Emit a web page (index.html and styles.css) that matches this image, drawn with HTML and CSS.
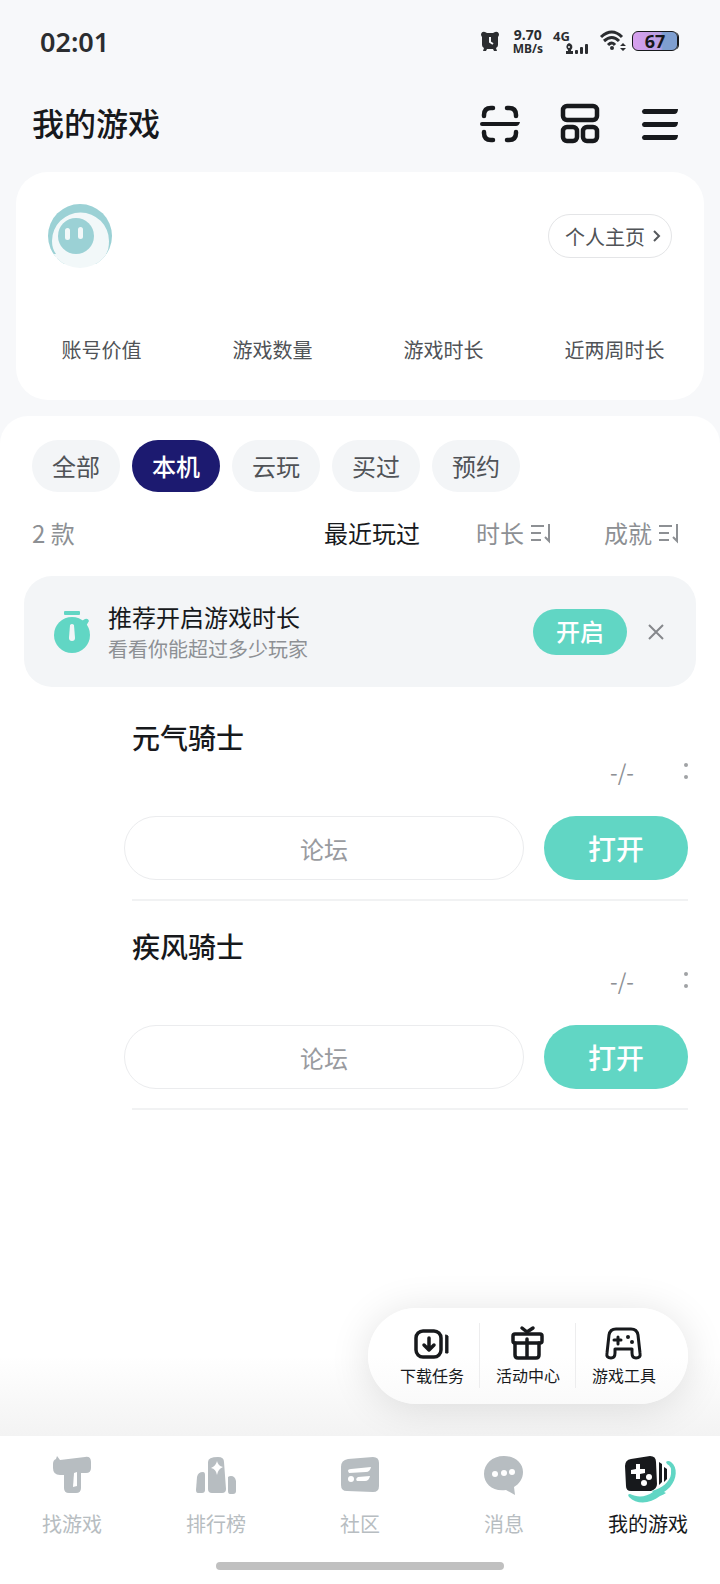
FILE: index.html
```html
<!DOCTYPE html>
<html lang="zh-CN">
<head>
    <meta charset="UTF-8">
    <meta name="viewport" content="width=device-width, initial-scale=1.0">
    <title>我的游戏</title>
    <link rel="stylesheet" href="styles.css">
</head>
<body>

<!-- Status Bar -->
<div class="status-bar">
    <span class="time">02:01</span>
    <div class="status-icons">
        <svg class="alarm" width="18" height="20" viewBox="0 0 18 20">
            <path d="M4 1Q1 0 0 3Q0 5 1 6V14Q1 16 3 17L2 20H5L6 18H12L13 20H16L15 17Q17 16 17 14V6Q18 5 18 3Q17 0 14 1L12 2H6Z" fill="#2b2d30"/>
            <path d="M9 6V11L12 13" fill="none" stroke="#f7f8fa" stroke-width="2"/>
        </svg>
        <div class="speed">
            <span class="speed-value">9.70</span>
            <span class="speed-unit">MB/s</span>
        </div>
        <div class="signal">
            <span>4G</span>
            <svg width="24" height="11" viewBox="0 0 24 11" fill="#2b2d30">
                <path d="M4 0A4 4 0 0 1 6 7V8H8V11H1V8H3V7A4 4 0 0 1 4 0Z"/>
                <circle cx="4" cy="4" r="1" fill="#f7f8fa"/>
                <rect x="10" y="7" width="3" height="4" rx="1"/>
                <rect x="15" y="4" width="3" height="7" rx="1"/>
                <rect x="20" y="1" width="3" height="10" rx="1"/>
            </svg>
        </div>
        <svg class="wifi" width="26" height="22" viewBox="0 0 26 22" fill="none" stroke="#2b2d30" stroke-width="3">
            <path d="M1 7Q12 -3 22 7"/>
            <path d="M4 11Q12 4 19 11"/>
            <path d="M8 15Q12 11 15 15"/>
            <circle cx="12" cy="18" r="2" fill="#2b2d30" stroke="none"/>
            <path d="M20 16L23 13L26 16ZM20 18L23 21L26 18Z" fill="#2b2d30" stroke="none"/>
        </svg>
        <div class="battery">67</div>
    </div>
</div>

<!-- Header -->
<header>
    <h1>我的游戏</h1>
    <div class="header-actions">
        <button type="button" aria-label="扫一扫">
            <svg width="40" height="40" viewBox="0 0 40 40" fill="none" stroke="#17191c" stroke-width="4.5" stroke-linecap="round">
                <path d="M4 12V11Q4 4 11 4H13M27 4H29Q36 4 36 11V12M36 28V29Q36 36 29 36H27M13 36H11Q4 36 4 29V28"/>
                <path d="M2 18H40Q39 22 36 22H2Q0 22 0 20T2 18Z" fill="#17191c" stroke="none"/>
            </svg>
        </button>
        <button type="button" aria-label="布局">
            <svg width="40" height="40" viewBox="0 0 40 40" fill="none" stroke="#17191c" stroke-width="4.5">
                <rect x="3" y="2" width="34" height="14" rx="4"/>
                <rect x="3" y="23" width="14" height="14" rx="4"/>
                <rect x="23" y="23" width="14" height="14" rx="4"/>
            </svg>
        </button>
        <button type="button" aria-label="菜单">
            <svg width="40" height="40" viewBox="0 0 40 40" fill="#17191c">
                <path d="M4 5H38Q38 10 34 10H4Q2 9.500 2 7.500T4 5Z"/>
                <path d="M4 18H38Q38 23 34 23H4Q2 22.500 2 20.500T4 18Z"/>
                <path d="M4 31H38Q38 36 34 36H4Q2 35.500 2 33.500T4 31Z"/>
            </svg>
        </button>
    </div>
</header>

<!-- Profile Card -->
<section class="profile-card">
    <div class="profile-top">
        <svg class="avatar" width="64" height="64" viewBox="0 0 64 64">
            <clipPath id="avatar-clip"><circle cx="32" cy="32" r="32"/></clipPath>
            <g clip-path="url(#avatar-clip)">
                <path d="M0 0H64V50H59L55 60H9V53L0 50Z" fill="#9bd1d5"/>
                <path d="M4 37A28 28 0 0 1 61 37Q61 46 58 50L64 52V64H0V50H8Q4 45 4 37Z" fill="#f2f8f9"/>
                <circle cx="28" cy="32" r="18" fill="#9bd1d5"/>
                <rect x="17" y="24" width="5" height="12" rx="2.5" fill="#f2f8f9"/>
                <rect x="30" y="23" width="5" height="12" rx="2.5" fill="#f2f8f9"/>
            </g>
        </svg>
        <a href="#" class="profile-link">个人主页
            <svg width="8" height="12" viewBox="0 0 8 12" fill="none" stroke="#55585c" stroke-width="2"><path d="M1 1L6 6L1 11"/></svg>
        </a>
    </div>
    <ul class="stats">
        <li>账号价值</li>
        <li>游戏数量</li>
        <li>游戏时长</li>
        <li>近两周时长</li>
    </ul>
</section>

<main>
    <!-- Filter Chips -->
    <div class="chips">
        <button type="button">全部</button>
        <button type="button" class="active">本机</button>
        <button type="button">云玩</button>
        <button type="button">买过</button>
        <button type="button">预约</button>
    </div>

    <!-- Sort Row -->
    <div class="sort-row">
        <span class="count">2 款</span>
        <button type="button" class="active">最近玩过</button>
        <button type="button">时长
            <svg width="20" height="20" viewBox="0 0 20 20" fill="none" stroke="#8d9094" stroke-width="2"><path d="M-1 3H12M-1 10H9M-1 17H9M17 1V18L13 14"/></svg>
        </button>
        <button type="button">成就
            <svg width="20" height="20" viewBox="0 0 20 20" fill="none" stroke="#8d9094" stroke-width="2"><path d="M-1 3H12M-1 10H9M-1 17H9M17 1V18L13 14"/></svg>
        </button>
    </div>

    <!-- Play Time Banner -->
    <div class="banner">
        <svg width="38" height="44" viewBox="0 0 38 44" fill="#61d6c4">
            <rect x="10" y="1" width="16" height="4" rx="1"/>
            <circle cx="18" cy="25" r="18"/>
            <path d="M26 12L31 9Q34 8 35 11L32 16Z"/>
            <path d="M16 15Q18 13 20 15L21 28Q21 31 18 31T15 28Z" fill="#f3f5f7"/>
        </svg>
        <div class="banner-text">
            <h2>推荐开启游戏时长</h2>
            <p>看看你能超过多少玩家</p>
        </div>
        <button type="button" class="banner-open">开启</button>
        <button type="button" class="banner-close" aria-label="关闭">
            <svg width="16" height="16" viewBox="0 0 16 16" stroke="#85888c" stroke-width="2"><path d="M1 1L15 15M15 1L1 15"/></svg>
        </button>
    </div>

    <!-- Game List -->
    <ul class="games">
        <li class="game">
            <h3>元气骑士</h3>
            <div class="game-meta">
                <span>-/-</span>
                <button type="button" aria-label="更多"><svg width="4" height="16" viewBox="0 0 4 16" fill="#a0a2a5"><circle cx="2" cy="2" r="2"/><circle cx="2" cy="14" r="2"/></svg></button>
            </div>
            <div class="game-actions">
                <button type="button" class="forum">论坛</button>
                <button type="button" class="open">打开</button>
            </div>
        </li>
        <li class="game">
            <h3>疾风骑士</h3>
            <div class="game-meta">
                <span>-/-</span>
                <button type="button" aria-label="更多"><svg width="4" height="16" viewBox="0 0 4 16" fill="#a0a2a5"><circle cx="2" cy="2" r="2"/><circle cx="2" cy="14" r="2"/></svg></button>
            </div>
            <div class="game-actions">
                <button type="button" class="forum">论坛</button>
                <button type="button" class="open">打开</button>
            </div>
        </li>
    </ul>

    <!-- Quick Tools -->
    <div class="tools">
        <a href="#">
            <svg width="40" height="40" viewBox="0 0 40 40" fill="none" stroke="#17191c" stroke-width="3.5" stroke-linecap="round" stroke-linejoin="round">
                <rect x="4" y="8" width="25" height="26" rx="7"/>
                <path d="M17 15V27M12 22L17 27L22 22"/>
                <path d="M34 12L36 13V30H34Z" fill="#17191c" stroke-width="1"/>
            </svg>
            下载任务
        </a>
        <a href="#">
            <svg width="40" height="40" viewBox="0 0 40 40" fill="none" stroke="#17191c" stroke-width="3.5" stroke-linecap="round" stroke-linejoin="round">
                <rect x="5" y="11" width="29" height="9" rx="2"/>
                <path d="M7 20V32Q7 35 10 35H28Q31 35 31 32V20M19 16V35M14 5L19 9L25 5"/>
            </svg>
            活动中心
        </a>
        <a href="#">
            <svg width="40" height="40" viewBox="0 0 40 40" fill="none" stroke="#17191c" stroke-width="3" stroke-linecap="round" stroke-linejoin="round">
                <path d="M11 26H28V30Q28 35 32 35Q37 35 36 30L34 12Q33 6 27 6H12Q6 6 5 12L3 30Q2 35 7 35Q11 35 11 30Z"/>
                <path d="M10 17H17M14 14V21"/>
                <circle cx="24" cy="14" r="2" fill="#17191c" stroke="none"/>
                <circle cx="28" cy="19" r="2" fill="#17191c" stroke="none"/>
            </svg>
            游戏工具
        </a>
    </div>
</main>

<!-- Bottom Navigation -->
<footer>
    <nav>
        <a href="#">
            <svg width="40" height="40" viewBox="0 0 40 40" fill="#b7bdc1">
                <path d="M5 1L8 5L33 2Q39 1 39 7V13Q39 18 34 18H29V33Q29 38 24 38H17Q12 38 12 33V20H8Q1 20 1 13V9Q1 5 4 4Z"/>
                <path d="M22 18L25 17V31L21 32Z" fill="#fff"/>
            </svg>
            找游戏
        </a>
        <a href="#">
            <svg width="40" height="40" viewBox="0 0 40 40" fill="#b7bdc1">
                <path d="M0 35L1 22Q2 17 7 17Q9 17 9 20V35Q9 38 6 38H2Q0 38 0 35Z"/>
                <path d="M12 34V7Q12 2 22 2Q28 2 28 7L30 34Q30 38 26 38H16Q12 38 12 34Z"/>
                <path d="M32 36V22Q33 21 35 21Q39 21 40 26V36Q40 39 37 39H34Q32 39 32 36Z"/>
                <path d="M21 6Q22 11 27 12Q22 14 21 20Q20 14 15 13Q20 11 21 6Z" fill="#fff"/>
            </svg>
            排行榜
        </a>
        <a href="#">
            <svg width="40" height="40" viewBox="0 0 40 40" fill="#b7bdc1">
                <path d="M1 12Q1 5 8 4L33 2Q39 2 39 8V31Q39 37 33 37L7 36Q1 36 1 30Z"/>
                <path d="M8 16Q8 14 11 14L31 12Q30 17 26 17L9 18Z" fill="#fff"/>
                <circle cx="11" cy="24" r="3" fill="#fff"/>
                <path d="M18 22L30 21Q29 26 25 26H17Q15 24 18 22Z" fill="#fff"/>
            </svg>
            社区
        </a>
        <a href="#">
            <svg width="40" height="40" viewBox="0 0 40 40" fill="#b7bdc1">
                <path d="M20 1C31 1 39 8 39 17C39 24 35 29 30 32L31 40L22 35C9 37 0 29 0 19C0 9 8 1 20 1Z"/>
                <circle cx="11" cy="19" r="3" fill="#fff"/>
                <circle cx="20" cy="18" r="3" fill="#fff"/>
                <circle cx="28" cy="17" r="3" fill="#fff"/>
            </svg>
            消息
        </a>
        <a href="#" class="active">
            <svg width="40" height="40" viewBox="0 0 40 40" fill="#17191c">
                <path d="M-3 11Q-3 5 3 4L22 1Q28 1 28 7L29 29Q29 34 23 36H3Q-2 36 -2 31Z"/>
                <path d="M31 7L34 9V27L31 30ZM36 12L39 14V24L36 27Z"/>
                <path d="M8 9H12V14H17V18L12 19V24H8V19H3V15L8 14Z" fill="#fff"/>
                <circle cx="21" cy="22" r="3" fill="#fff"/>
                <circle cx="16" cy="28" r="3" fill="#fff"/>
                <path d="M38 7Q40 5 43 7C50 12 49 24 42 32Q39 35 36 37L38 38Q35 40 32 41C22 49 9 50 1 42Q-1 39 2 39C10 43 18 42 25 37L24 36C34 33 42 27 43 19Q44 11 39 9Z" fill="#61d6c4"/>
            </svg>
            我的游戏
        </a>
    </nav>
    <div class="home-indicator"></div>
</footer>

</body>
</html>
```
FILE: styles.css
```css
/* Basic Reset */
* {
    margin: 0;
    padding: 0;
    box-sizing: border-box;
}

body {
    font-family: "Noto Sans CJK SC", "Noto Sans", sans-serif;
    background-color: #f7f8fa;
    color: #17191c;
    display: flex;
    flex-direction: column;
    min-height: 100vh;
}

button {
    font-family: inherit;
    color: inherit;
    background: none;
    border: none;
    cursor: pointer;
}

a {
    color: inherit;
    text-decoration: none;
}

ul {
    list-style: none;
}

svg {
    display: block;
    flex: none;
    overflow: visible;
}

/* Status Bar */
.status-bar {
    display: flex;
    justify-content: space-between;
    align-items: center;
    height: 82px;
    padding: 0 40px;
    color: #2b2d30;
}

.time {
    font-family: "Noto Sans", sans-serif;
    font-size: 27px;
    font-weight: 600;
}

.status-icons {
    display: flex;
    align-items: center;
    font-family: "Noto Sans", sans-serif;
    font-weight: 700;
}

.speed {
    display: flex;
    flex-direction: column;
    align-items: center;
    margin-left: 14px;
}

.speed-value {
    font-size: 14px;
    line-height: 15px;
}

.speed-unit {
    font-size: 12px;
    line-height: 13px;
}

.signal {
    display: flex;
    flex-direction: column;
    width: 36px;
    margin-left: 10px;
    font-size: 13px;
    line-height: 14px;
}

.signal svg {
    align-self: flex-end;
}

.wifi {
    margin-left: 11px;
}

.battery {
    display: flex;
    align-items: center;
    justify-content: center;
    width: 46px;
    height: 20px;
    margin: 0 2px 0 6px;
    border: 1px solid #17191c;
    border-radius: 6px;
    box-shadow: 2px 0 0 -1px #17191c;
    background: linear-gradient(90deg, #d8a0ee 0%, #b9a0e4 62%, #7f9fd0 68%);
    color: #17191c;
    font-size: 18px;
}

/* Header */
header {
    display: flex;
    justify-content: space-between;
    align-items: center;
    height: 84px;
    padding: 0 40px 0 32px;
}

header h1 {
    padding-bottom: 4px;
    font-size: 32px;
    font-weight: 500;
}

.header-actions {
    display: flex;
    gap: 40px;
}

/* Profile Card */
.profile-card {
    margin: 6px 16px 16px;
    padding: 32px 0 36px;
    background-color: white;
    border-radius: 32px;
}

.profile-top {
    display: flex;
    justify-content: space-between;
    align-items: center;
    padding: 0 32px;
}

.profile-link {
    display: flex;
    align-items: center;
    gap: 8px;
    height: 44px;
    padding: 0 10px 0 16px;
    border: 1px solid #e4e5e7;
    border-radius: 22px;
    color: #505357;
    font-size: 20px;
}

.stats {
    display: grid;
    grid-template-columns: repeat(4, 1fr);
    margin-top: 68px;
    padding-right: 4px;
    color: #505357;
    font-size: 20px;
    line-height: 28px;
    text-align: center;
}

/* Main Panel */
main {
    flex: 1;
    display: flex;
    flex-direction: column;
    padding: 24px 0 32px;
    border-radius: 28px 28px 0 0;
    background: linear-gradient(to top, #f3f3f3, white 80px);
}

.chips {
    display: flex;
    gap: 12px;
    padding: 0 32px;
}

.chips button {
    height: 52px;
    padding: 0 20px 2px;
    border-radius: 26px;
    background-color: #f3f5f7;
    color: #505357;
    font-size: 24px;
}

.chips .active {
    background-color: #1c1a70;
    color: white;
    font-weight: 500;
}

.sort-row {
    display: flex;
    gap: 52px;
    margin: 23px 40px 25px 32px;
    color: #8d9094;
    font-size: 24px;
    line-height: 36px;
}

.sort-row button {
    display: flex;
    align-items: center;
    gap: 8px;
    font-size: 24px;
    line-height: 36px;
}

.sort-row .active {
    margin-right: 4px;
    color: #17191c;
}

.count {
    flex: 1;
}

/* Banner */
.banner {
    display: flex;
    align-items: center;
    margin: 0 24px;
    padding: 24px 32px 24px 30px;
    border-radius: 28px;
    background-color: #f3f5f7;
}

.banner-text {
    flex: 1;
    margin-left: 16px;
}

.banner h2 {
    font-size: 24px;
    font-weight: 400;
    line-height: 34px;
}

.banner p {
    color: #8d9094;
    font-size: 20px;
    line-height: 29px;
}

.banner-open {
    height: 46px;
    margin-right: 21px;
    padding: 0 23px 2px;
    border-radius: 23px;
    background-color: #61d6c4;
    color: white;
    font-size: 24px;
    font-weight: 500;
}

/* Game List */
.games {
    margin: 5px 32px 32px 132px;
}

.game {
    padding: 27px 0 19px;
    border-bottom: 2px solid #f1f2f3;
}

.game h3 {
    font-size: 28px;
    font-weight: 500;
    line-height: 36px;
}

.game-meta {
    display: flex;
    justify-content: flex-end;
    align-items: center;
    gap: 50px;
    margin-top: 2px;
    color: #8d9094;
    font-size: 22px;
    line-height: 28px;
}

.game-actions {
    display: flex;
    gap: 20px;
    margin: 31px 0 0 -8px;
}

.game-actions button {
    height: 64px;
    border-radius: 32px;
}

.forum {
    flex: 1;
    border: 1px solid #ebecee;
    color: #999b9f;
    font-size: 24px;
}

.open {
    width: 144px;
    background-color: #61d6c4;
    color: white;
    font-size: 28px;
    font-weight: 500;
}

/* Quick Tools */
.tools {
    display: flex;
    align-self: flex-end;
    height: 96px;
    margin: auto 32px 0 0;
    padding: 15px 16px 16px;
    border-radius: 48px;
    background: linear-gradient(white 50%, #fafafa);
    box-shadow: 0 4px 40px rgba(0, 0, 0, 0.12);
}

.tools a {
    display: flex;
    flex-direction: column;
    align-items: center;
    width: 96px;
    font-size: 16px;
    line-height: 24px;
}

.tools a + a {
    box-shadow: -1px 0 0 #ededee;
}

/* Footer */
footer {
    padding: 19px 0 14px;
    background-color: white;
}

footer nav {
    display: flex;
}

footer nav a {
    flex: 1;
    display: flex;
    flex-direction: column;
    align-items: center;
    gap: 15px;
    color: #b7bdc1;
    font-size: 20px;
    line-height: 28px;
}

footer nav .active {
    color: #17191c;
}

.home-indicator {
    width: 40%;
    height: 8px;
    margin: 24px auto 0;
    border-radius: 4px;
    background-color: #c0c0c0;
}
```
